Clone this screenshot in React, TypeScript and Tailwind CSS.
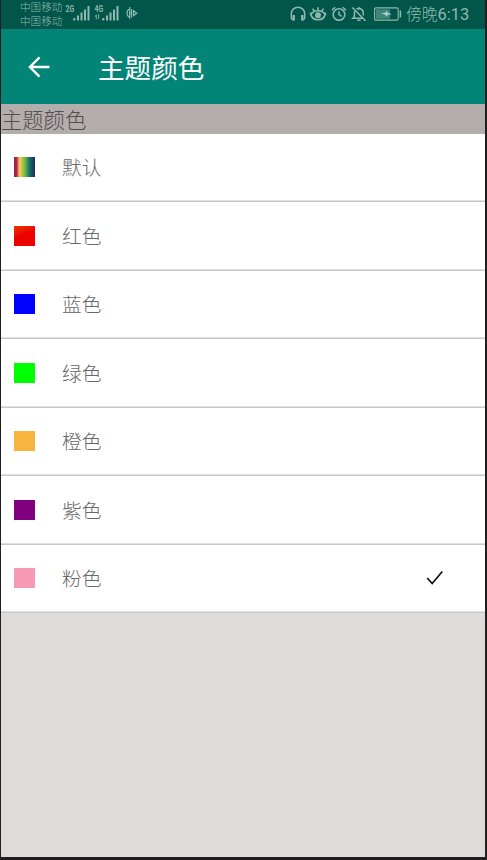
import React from "react";

const rows = [
  { label: "默认", swatch: "bg-[linear-gradient(90deg,#8c2347_0%,#b82a47_14%,#e8875c_20%,#e9d168_28%,#a9c43c_42%,#6fae3d_55%,#1d8568_68%,#14596a_82%,#1b2a50_100%)]" },
  { label: "红色", swatch: "bg-[linear-gradient(160deg,#e93a00_0%,#ee0000_45%,#ea0000_100%)]" },
  { label: "蓝色", swatch: "bg-[#0000ff]" },
  { label: "绿色", swatch: "bg-[#00ff00]" },
  { label: "橙色", swatch: "bg-[#f7b53f]" },
  { label: "紫色", swatch: "bg-[#800080]" },
  { label: "粉色", swatch: "bg-[#f699b4]", checked: true },
];

function Signal({ label, arrows }: { label: string; arrows?: boolean }) {
  return (
    <svg width="26" height="18" viewBox="0 0 26 18" fill="#8fb8b0" className="shrink-0">
      <text x="0.5" y="8" fontSize="8.5" fontWeight="700" textLength="8.5" lengthAdjust="spacingAndGlyphs" fontFamily="Roboto, sans-serif">
        {label}
      </text>
      {arrows && <path d="M0.5 12.5 2.7 10.2V15.5H1.8V12.5ZM4.2 10.2H5.1V15H4.2Z" />}
      <rect x="8.3" y="14" width="2" height="2.5" />
      <rect x="12" y="11.5" width="2" height="5" />
      <rect x="15.5" y="8.5" width="2" height="8" />
      <rect x="19" y="5.5" width="2" height="11" />
      <rect x="22.5" y="2" width="2" height="14.5" />
    </svg>
  );
}

function StatusBar() {
  return (
    <div className="flex h-[29px] shrink-0 items-start bg-[#015649] text-[#8fb8b0]">
      <div className="ml-[19px] w-[45px] whitespace-nowrap text-[10.6px] leading-[14px]">
        <div>中国移动</div>
        <div>中国移动</div>
      </div>
      <div className="flex pt-[4px]">
        <Signal label="2G" />
        <span className="w-[3px]" />
        <Signal label="4G" arrows />
      </div>
      <svg width="12" height="14" viewBox="0 0 12 14" className="ml-[6px] mt-[6px]" fill="none" stroke="#8fb8b0" strokeWidth="1.2">
        <path d="M3 3.2Q1 4 1 7Q1 10 3 11M3.7 1V13M5.6 3V11.5M3 7H5.6" />
        <path d="M7.6 4.8V9.6L10.8 7.2Z" />
      </svg>
      <div className="ml-auto flex h-[28px] items-center">
        <svg width="16" height="16" viewBox="0 0 16 16" fill="none" stroke="#8fb8b0" strokeWidth="1.5">
          <path d="M1.3 12V7.6A6.6 6.2 0 0 1 14.7 7.6V12Q14.5 13.8 12.5 14M1.3 12Q1.5 13.8 3.5 14" />
          <path d="M3.7 9V14.5M12.3 9V14.5" strokeWidth="2.4" />
        </svg>
        <svg width="18" height="16" viewBox="0 0 18 16" fill="none" stroke="#8fb8b0" strokeWidth="1.6" className="ml-[3px]">
          <path d="M1.4 6.6Q2.2 13.8 9 13.8Q15.8 13.8 16.6 6.6M1.8 8.6Q4.5 4.8 9 4.8Q13.5 4.8 16.2 8.6" />
          <circle cx="9" cy="9.2" r="3" fill="#8fb8b0" stroke="none" />
          <path d="M9 1.2V4.8M3.6 2.6 5.4 5.4M14.4 2.6 12.6 5.4" />
        </svg>
        <svg width="16" height="16" viewBox="0 0 16 16" fill="none" stroke="#8fb8b0" strokeWidth="1.5" className="ml-[4px]">
          <circle cx="8" cy="8.5" r="5.8" />
          <path d="M8 5.3V8.7L10.6 10.3M1 4.1 4.2 1.3M15 4.1 11.8 1.3" />
        </svg>
        <svg width="16" height="16" viewBox="0 0 16 16" fill="none" stroke="#8fb8b0" strokeWidth="1.5" className="ml-[4px]">
          <path d="M5.5 3.3Q6.4 2.5 8 2.5Q12.4 2.9 12.3 7.8V9.6M3.7 5.3Q3.4 6.3 3.4 8V10.5L1.8 12.3H11.6M8 2.5V1M6.4 14.3H9.6M1.3 1.5 14.5 14.7" />
        </svg>
        <svg width="28" height="14" viewBox="0 0 28 14" fill="none" className="ml-[7px]">
          <rect x=".6" y=".9" width="23.6" height="12.2" rx="1.2" stroke="#8fb8b0" strokeWidth="1.1" />
          <rect x="2" y="2.3" width="14" height="9.4" fill="#41867b" />
          <path d="M7 6.3 11.6 5.8 12.4 3.6 13.6 5.8 18 7.2 13.4 7.8 12.6 9.8 11.4 7.8Z" fill="#b5d6d0" />
          <path d="M26.4 3.5V10.5" stroke="#8fb8b0" strokeWidth="1.5" />
        </svg>
        <span className="ml-[4px] mr-[16px] w-[63px] whitespace-nowrap text-[15.8px] leading-[20px]">
          傍晚<span className="font-[Roboto] text-[16.4px] font-normal">6:13</span>
        </span>
      </div>
    </div>
  );
}

export default function App() {
  return (
    <div className="flex h-[860px] w-[487px] flex-col overflow-hidden border-b-[3px] border-l border-r-2 border-[#211e1f] bg-[#dfdbda] font-['Noto_Sans_CJK_SC','Noto_Sans',sans-serif] font-light">
      <StatusBar />
      <header className="flex h-[75px] shrink-0 items-center bg-[#028576] text-white">
        <svg width="22" height="22" viewBox="0 0 22 22" fill="none" stroke="white" strokeWidth="2.4" className="ml-[27px]">
          <path d="M21.5 11H2.5M11.5 1.3 1.9 11 11.5 20.7" />
        </svg>
        <h1 className="ml-[48px] text-[26.6px] font-normal leading-[40px]">主题颜色</h1>
      </header>
      <div className="h-[29.5px] shrink-0 overflow-hidden bg-[#b3adac] text-[21.3px] leading-[30px] text-[#524e4e]">主题颜色</div>
      <ul className="shrink-0">
        {rows.map((r) => (
          <li key={r.label} className="flex h-[68.5px] items-center border-b border-[#c9c8c8] bg-white shadow-[inset_0_-1px_0_#e2e1e1]">
            <span className={`ml-[13.4px] h-5 w-[20.6px] ${r.swatch}`} />
            <span className="ml-[27px] text-[19.7px] leading-[30px] text-[#686868]">{r.label}</span>
            {r.checked && (
              <svg width="18" height="16" viewBox="0 0 18 16" fill="none" stroke="#111" strokeWidth="1.7" className="ml-auto mr-[41px]">
                <path d="M1.2 8 6.2 13.5 16.3 1.5" />
              </svg>
            )}
          </li>
        ))}
      </ul>
    </div>
  );
}
